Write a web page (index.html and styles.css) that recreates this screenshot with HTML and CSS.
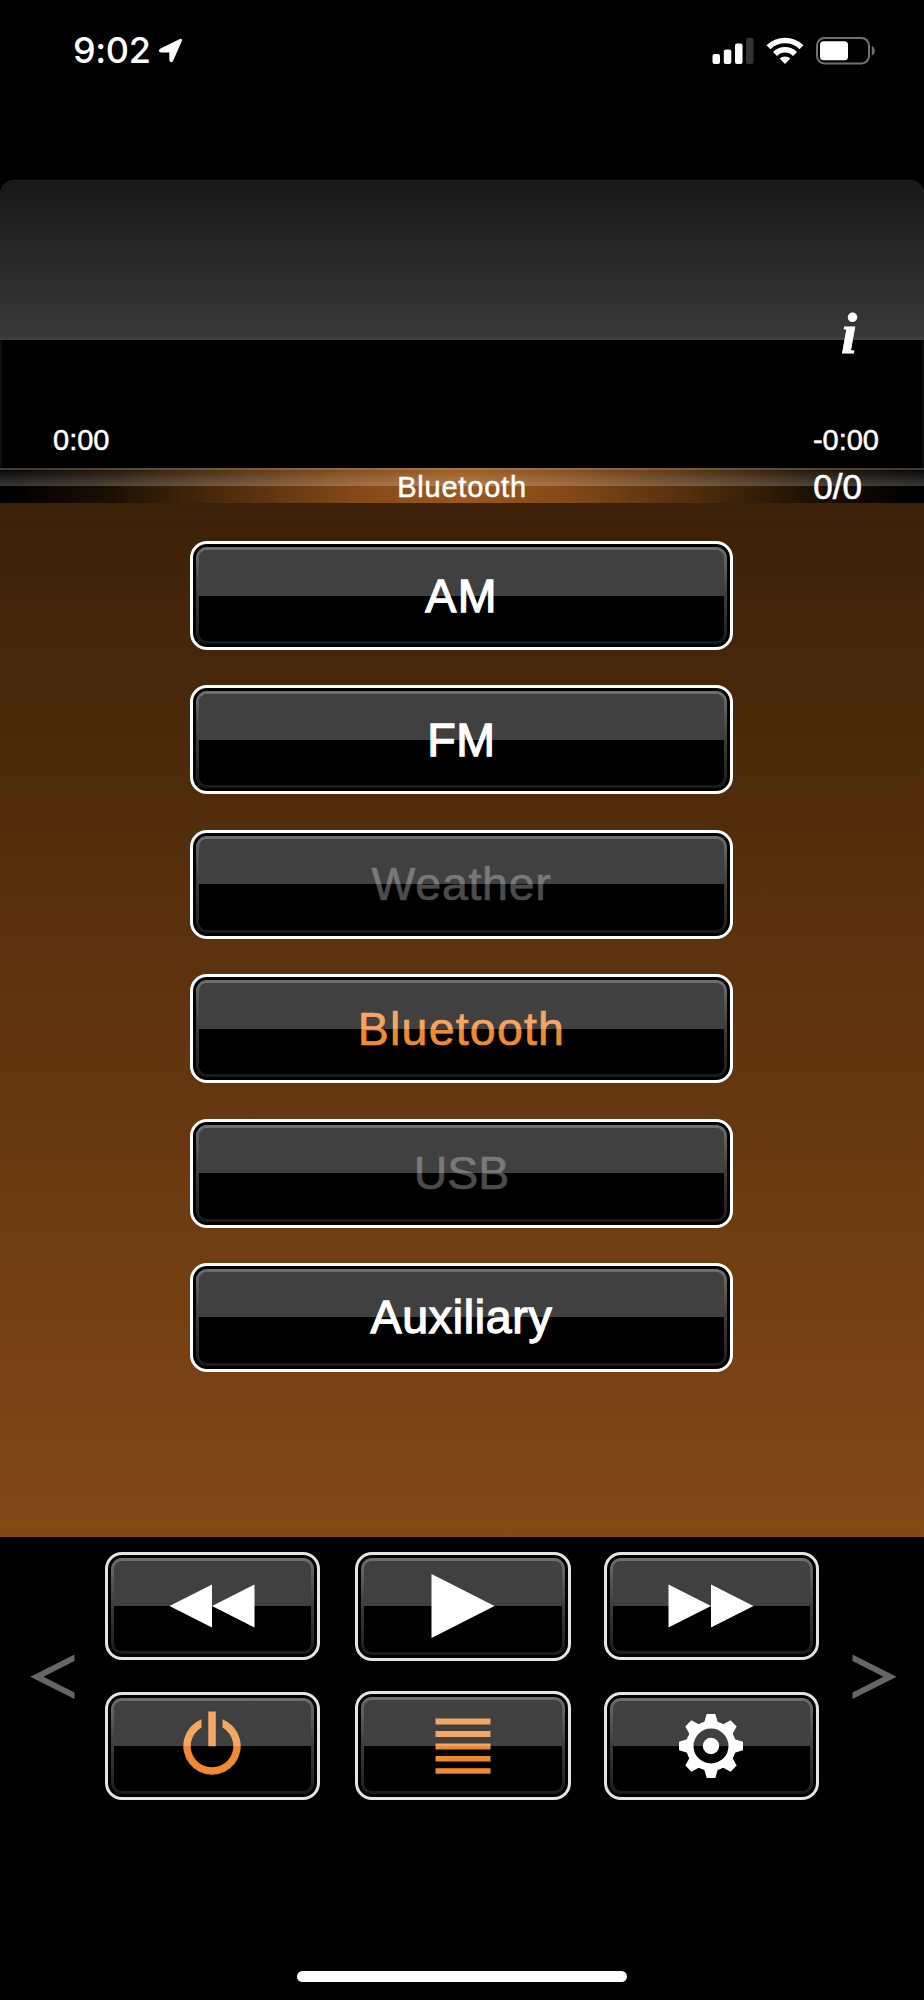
FILE: index.html
```html
<!DOCTYPE html>
<html lang="en">
<head>
    <meta charset="UTF-8">
    <meta name="viewport" content="width=device-width, initial-scale=1.0">
    <title>Radio Remote</title>
    <link rel="stylesheet" href="styles.css">
</head>
<body>

    <div class="status-bar">
        <div class="clock">
            <span class="clock-time">9:02</span>
            <svg width="26" height="26" viewBox="0 0 26 26">
                <path d="M23 2.6 14.2 22.6Q13 24.4 12.2 22V13.6H3Q.4 13 3 11.2L21.8 2Q23.6 1.2 23 2.6Z" fill="#fff" stroke="#fff" stroke-width="1.8" stroke-linejoin="round"/>
            </svg>
        </div>
        <div class="status-icons">
            <svg width="42" height="28" viewBox="0 0 42 28">
                <rect x="0.5" y="17" width="7.5" height="10" rx="2" fill="#fff"/>
                <rect x="11.8" y="12.5" width="7.5" height="14.5" rx="2" fill="#fff"/>
                <rect x="23" y="6.5" width="7.5" height="20.5" rx="2" fill="#fff"/>
                <rect x="34" y="0.7" width="7.5" height="26.3" rx="2" fill="#333"/>
            </svg>
            <svg width="38" height="28" viewBox="0 0 38 28">
                <g fill="none" stroke="#fff" stroke-width="5.6">
                    <path d="M2.5 10.2A23.5 23.5 0 0 1 35.5 10.2"/>
                    <path d="M9 17A14 14 0 0 1 29 17"/>
                </g>
                <path d="M19 27 13.7 21.6A7.7 7.7 0 0 1 24.3 21.6Z" fill="#fff"/>
            </svg>
            <svg width="60" height="28" viewBox="0 0 60 28">
                <rect x="1" y="1" width="52" height="25.5" rx="7.5" fill="none" stroke="#707070" stroke-width="2"/>
                <rect x="4" y="4.2" width="28" height="19" rx="3.5" fill="#fff"/>
                <path d="M55.8 9v9.6q3-1.400 3-4.800t-3-4.800z" fill="#707070"/>
            </svg>
        </div>
    </div>

    <div class="display">
        <div class="display-gloss">
            <button class="info">i</button>
        </div>
        <div class="times">
            <span>0:00</span>
            <span>-0:00</span>
        </div>
    </div>

    <div class="title-bar">
        <span></span>
        <span class="title">Bluetooth</span>
        <span class="counter">0/0</span>
    </div>

    <div class="sources">
        <button class="key"><span class="face"><span class="label label-am">AM</span></span></button>
        <button class="key"><span class="face"><span class="label label-fm">FM</span></span></button>
        <button class="key" disabled><span class="face"><span class="label disabled">Weather</span></span></button>
        <button class="key"><span class="face"><span class="label active">Bluetooth</span></span></button>
        <button class="key" disabled><span class="face"><span class="label disabled label-usb">USB</span></span></button>
        <button class="key"><span class="face"><span class="label">Auxiliary</span></span></button>
    </div>

    <div class="controls">
        <svg class="arrow" width="45" height="46" viewBox="0 0 45 46">
            <path d="M44.500 .5V7L13.500 22.700 44.500 38.500V45L.3 22.700Z" fill="#666"/>
        </svg>
        <div class="keypad">
            <button class="key" aria-label="Rewind"><span class="face">
                <svg width="86" height="44" viewBox="0 0 86 44">
                    <path d="M.5 22 43 .5V43.500ZM43 22 85.500 .5V43.500Z" fill="#fff"/>
                </svg>
            </span></button>
            <button class="key key-main" aria-label="Play"><span class="face">
                <svg width="64" height="64" viewBox="0 0 64 64">
                    <path d="M.5 0 63.500 32 .5 64Z" fill="#fff"/>
                </svg>
            </span></button>
            <button class="key" aria-label="Forward"><span class="face">
                <svg width="86" height="44" viewBox="0 0 86 44">
                    <path d="M.5 .5 43 22 .5 43.500ZM43 .5 85.500 22 43 43.500Z" fill="#fff"/>
                </svg>
            </span></button>
            <button class="key" aria-label="Power"><span class="face">
                <svg width="70" height="70" viewBox="-35 -35 70 70">
                    <g fill="#f08a30">
                        <path d="M-10.500-26.700A28.700 28.700 0 1 0 10.500-26.700V-18.500A21.300 21.300 0 1 1-10.500-18.500Z"/>
                        <rect x="-3.700" y="-34.500" width="7.500" height="34.800"/>
                    </g>
                </svg>
            </span></button>
            <button class="key key-main" aria-label="Menu"><span class="face">
                <svg width="70" height="70" viewBox="-35 -35 70 70">
                    <g fill="#f08a30">
                        <rect x="-27.500" y="-27.500" width="55" height="6"/>
                        <rect x="-27.500" y="-15" width="55" height="6"/>
                        <rect x="-27.500" y="-2.500" width="55" height="6"/>
                        <rect x="-27.500" y="10" width="55" height="5.500"/>
                        <rect x="-27.500" y="22.200" width="55" height="5.500"/>
                    </g>
                </svg>
            </span></button>
            <button class="key" aria-label="Settings"><span class="face">
                <svg width="70" height="70" viewBox="-35 -35 70 70">
                    <defs>
                        <path id="tooth" d="M-9.500-21-6.500-24.500-4.300-32H4.300L6.500-24.500 9.500-21Z"/>
                    </defs>
                    <circle r="21.200" fill="none" stroke="#fff" stroke-width="7.400"/>
                    <circle r="8.200" fill="#fff"/>
                    <g fill="#fff">
                        <use href="#tooth"/>
                        <use href="#tooth" transform="rotate(45)"/>
                        <use href="#tooth" transform="rotate(90)"/>
                        <use href="#tooth" transform="rotate(135)"/>
                        <use href="#tooth" transform="rotate(180)"/>
                        <use href="#tooth" transform="rotate(225)"/>
                        <use href="#tooth" transform="rotate(270)"/>
                        <use href="#tooth" transform="rotate(315)"/>
                    </g>
                </svg>
            </span></button>
        </div>
        <svg class="arrow" width="45" height="46" viewBox="0 0 45 46">
            <path d="M.5 .5V7L31.500 22.700 .5 38.500V45L44.700 22.700Z" fill="#666"/>
        </svg>
    </div>

    <div class="home-indicator"></div>

</body>
</html>
```
FILE: styles.css
```css
* {
    box-sizing: border-box;
}
body {
    margin: 0;
    width: 924px;
    height: 2000px;
    display: flex;
    flex-direction: column;
    background-color: #000;
    color: #fff;
    font-family: "Liberation Sans", Arial, sans-serif;
    overflow: hidden;
}
svg {
    display: block;
    flex: none;
}
button {
    border: none;
    padding: 0;
    background: none;
    color: inherit;
    font-family: inherit;
}

/* Status bar */
.status-bar {
    height: 180px;
    padding: 36px 48px 0 73px;
    display: flex;
    justify-content: space-between;
    align-items: flex-start;
}
.clock {
    display: flex;
    align-items: center;
    gap: 8px;
    height: 29px;
}
.clock-time {
    font-family: Inter, sans-serif;
    font-size: 36px;
    font-weight: 500;
    line-height: 29px;
    letter-spacing: -0.4px;
}
.status-icons {
    display: flex;
    gap: 12px;
    padding-top: 1px;
}

/* Display */
.display {
    height: 288px;
    border-left: 2px solid #0e0e0e;
    border-right: 2px solid #0e0e0e;
    border-radius: 14px 14px 0 0;
}
.display-gloss {
    height: 160px;
    margin: 0 -2px;
    padding: 125px 67px 0 0;
    display: flex;
    justify-content: flex-end;
    align-items: flex-start;
    border-radius: 14px 14px 0 0;
    border-top: 1px solid #222;
    border-bottom: 2px solid #404040;
    background: linear-gradient(#181818, #393939);
}
.info {
    font-family: "Liberation Serif", "Times New Roman", serif;
    font-size: 58px;
    font-weight: bold;
    font-style: italic;
    line-height: 56px;
    -webkit-text-stroke: 0.8px #fff;
}
.times {
    display: flex;
    justify-content: space-between;
    padding: 83px 43px 0 51px;
    font-size: 29px;
    line-height: 34px;
    -webkit-text-stroke: 0.5px #fff;
}

/* Title bar */
.title-bar {
    height: 35px;
    display: grid;
    grid-template-columns: 1fr auto 1fr;
    align-items: center;
    border-top: 2px solid rgba(190, 170, 145, 0.35);
    background:
        linear-gradient(rgba(255, 255, 255, 0.04), rgba(255, 255, 255, 0.22)) 0 0 / 100% 16px no-repeat,
        linear-gradient(90deg, #000 1%, #1c1003 12%, #48290b 23%, #824816 38%, #9c581e 50%, #824816 62%, #48290b 77%, #1c1003 88%, #000 99%);
}
.title {
    font-size: 29px;
    line-height: 34px;
    letter-spacing: 0.8px;
    -webkit-text-stroke: 0.5px #fff;
}
.counter {
    justify-self: end;
    padding-right: 62px;
    font-size: 35px;
    line-height: 34px;
    -webkit-text-stroke: 0.6px #fff;
}

/* Keys */
.key {
    display: flex;
    padding: 3px;
    border: 3px solid #fff;
    border-radius: 17px;
    background-color: #000;
}
.face {
    position: relative;
    flex: 1;
    align-self: stretch;
    display: flex;
    justify-content: center;
    align-items: center;
    border: 3px solid transparent;
    border-radius: 11px;
    background:
        linear-gradient(#000, #000) padding-box,
        linear-gradient(#707070, #3c3c3c 50%, #1a1a1a) border-box;
}
/* Glossy shine over the upper half, tints the label as well */
.face::after {
    content: "";
    position: absolute;
    inset: 0 0 50% 0;
    border-radius: 8px 8px 0 0;
    background-color: rgba(255, 255, 255, 0.25);
}

/* Source list */
.sources {
    height: 1034px;
    padding: 38px 1px 0 0;
    display: flex;
    flex-direction: column;
    align-items: center;
    gap: 35.4px;
    background: linear-gradient(#3b2108, #844816);
}
.sources .key {
    width: 543px;
    height: 109px;
}
.label {
    font-size: 46.5px;
    line-height: 54px;
    letter-spacing: 0.7px;
    -webkit-text-stroke: 1.3px;
}
.label-am {
    letter-spacing: 1.5px;
}
.label.active {
    color: #f08a30;
    letter-spacing: 1.2px;
    -webkit-text-stroke: 0.7px;
}
.label.disabled {
    color: #4c4c4c;
    -webkit-text-stroke: 0.7px;
}
.label.label-usb {
    letter-spacing: 0;
}

/* Bottom controls */
.controls {
    height: 434px;
    padding: 14px 27px 0 30px;
    display: flex;
    align-items: flex-start;
    justify-content: space-between;
}
.arrow {
    margin-top: 103px;
}
.keypad {
    margin-right: 4px;
    display: grid;
    grid-template-columns: 250px 249px 215px;
    grid-template-rows: 110px 109px;
    row-gap: 30px;
    align-items: center;
}
.keypad .key {
    width: 215px;
    height: 108px;
    border-color: #e4e4e4;
}
.keypad .key-main {
    width: 216px;
    height: 109px;
}
.home-indicator {
    width: 330px;
    height: 11px;
    align-self: center;
    flex: none;
    border-radius: 6px;
    background-color: #fff;
}
```
